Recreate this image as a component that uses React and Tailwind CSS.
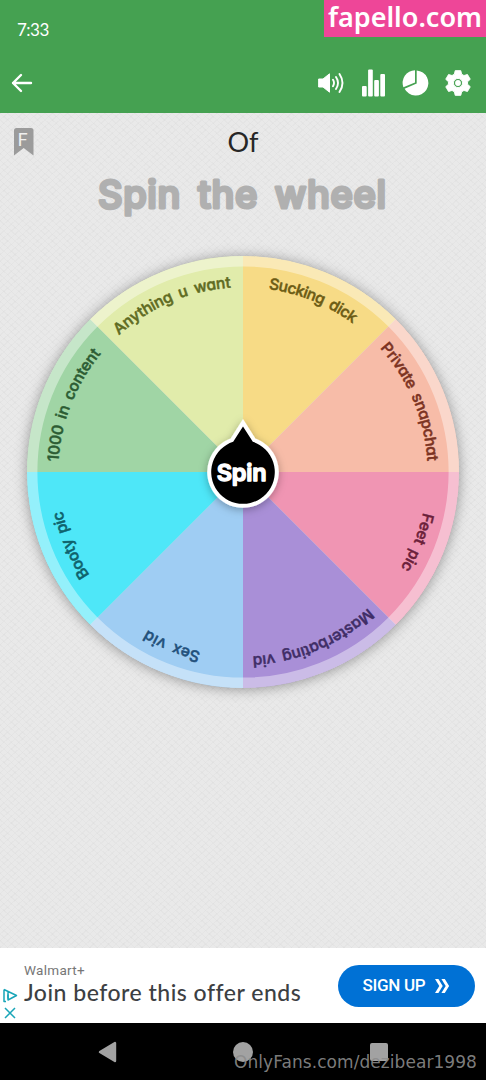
const CX = 220
const CY = 220
const R = 216
const LABEL_R = 184.7

const HUB = 'M220 174.5 L229.8 189.8 A31.8 31.8 0 1 1 210.2 189.8 Z'

const slices = [
  { label: 'Sucking dick', mid: 22.2, len: 92, fill: '#f7db86', text: '#6c5b14' },
  { label: 'Private snapchat', mid: 67.3, len: 125, fill: '#f7bca8', text: '#7c3322' },
  { label: 'Feet pic', mid: 112, len: 60, fill: '#f095b3', text: '#6b1f3a' },
  { label: 'Masterbating vid', mid: 157.2, len: 128, fill: '#a98fd7', text: '#3f2d66' },
  { label: 'Sex vid', mid: 202.2, len: 58, fill: '#9fcdf3', text: '#22507a' },
  { label: 'Booty pic', mid: 247, len: 70, fill: '#4ee7f8', text: '#0f626c' },
  { label: '1000 in content', mid: 291.5, len: 118, fill: '#a0d5a5', text: '#2c5c33' },
  { label: 'Anything u want', mid: 337, len: 124, fill: '#e1ecab', text: '#5f6b22' },
]

function point(angle, r) {
  const rad = (angle * Math.PI) / 180
  return `${(CX + r * Math.sin(rad)).toFixed(2)} ${(CY - r * Math.cos(rad)).toFixed(2)}`
}

function Wheel() {
  return (
    <svg width="440" height="440" viewBox="0 0 440 440" className="block overflow-visible">
      <defs>
        <filter id="wheelShadow" x="-20%" y="-20%" width="140%" height="140%">
          <feDropShadow dx="0" dy="1" stdDeviation="7" floodColor="#000" floodOpacity="0.4" />
        </filter>
        <filter id="hubShadow" x="-40%" y="-40%" width="180%" height="180%">
          <feDropShadow dx="0" dy="2" stdDeviation="4" floodColor="#000" floodOpacity="0.3" />
        </filter>
      </defs>
      <circle cx={CX} cy={CY} r={R - 0.5} fill="#ddd" filter="url(#wheelShadow)" />
      {slices.map((s, i) => (
        <path
          key={s.label}
          d={`M${CX} ${CY} L${point(i * 45, R)} A${R} ${R} 0 0 1 ${point(i * 45 + 45, R)} Z`}
          fill={s.fill}
        />
      ))}
      <circle cx={CX} cy={CY} r={R - 5.2} fill="none" stroke="#fff" strokeOpacity="0.4" strokeWidth="10.4" />
      {slices.map((s, i) => (
        <g key={s.label}>
          <path
            id={`arc-${i}`}
            d={`M${point(s.mid - 40, LABEL_R)} A${LABEL_R} ${LABEL_R} 0 0 1 ${point(s.mid + 40, LABEL_R)}`}
            fill="none"
          />
          <text
            className="font-['Inter',sans-serif] text-[15.5px] font-medium [font-feature-settings:'cv11']"
            fill={s.text}
            stroke={s.text}
            strokeWidth="0.5"
            strokeLinejoin="round"
            textAnchor="middle"
            textLength={s.len}
            wordSpacing="3"
          >
            <textPath href={`#arc-${i}`} startOffset="50%" textLength={s.len}>{s.label}</textPath>
          </text>
        </g>
      ))}
      {/* hub with pointer */}
      <path d={HUB} fill="#000" stroke="#fff" strokeWidth="8" strokeLinejoin="miter" filter="url(#hubShadow)" />
      <path d={HUB} fill="#000" />
      <text
        x="218.7" y="228.7" textAnchor="middle" textLength="50"
        fill="#fff" stroke="#fff" strokeWidth="1.4" strokeLinejoin="round"
        className="font-['Inter',sans-serif] text-[23.5px] font-semibold"
      >
        Spin
      </text>
    </svg>
  )
}

function Header() {
  return (
    <header className="h-[113px] bg-[#45a151] text-white">
      <div className="h-[56px] flex items-start justify-between">
        <span className="pl-[17px] pt-[19px] font-['Lato',sans-serif] text-[17px] leading-[22px] tracking-[-0.5px]">7:33</span>
        <div className="w-[162px] h-[37px] bg-[#ee4698] flex items-start justify-center">
          <span className="font-['Noto_Sans',sans-serif] font-semibold text-[27px] leading-[34px] tracking-[0px]">fapello.com</span>
        </div>
      </div>
      <div className="h-[54px] pl-[11px] pr-[14px] flex items-center justify-between">
        <svg width="22" height="22" viewBox="0 0 22 22" fill="none" stroke="#fff" strokeWidth="2.4" strokeLinecap="round" strokeLinejoin="round">
          <path d="M20 11H2M10 3L2 11l8 8" />
        </svg>
        <div className="flex items-center gap-[15px]">
          <svg width="28" height="28" viewBox="0 0 28 28" fill="none" stroke="#fff" strokeLinecap="round">
            <path d="M2 10h4l6.5-5.2v18.4L6 18H2z" fill="#fff" strokeWidth="1" strokeLinejoin="round" />
            <path d="M16 10.8q2 3.2 0 6.4M19 8q4 6 0 12M22.5 5q6 9 0 18" strokeWidth="1.9" />
          </svg>
          <svg width="26" height="28" viewBox="0 0 26 28" fill="#fff">
            <rect x="2" y="17" width="4.7" height="10.5" rx="1" />
            <rect x="8.1" y="0.5" width="4.7" height="27" rx="1" />
            <rect x="14.2" y="11" width="4.7" height="16.5" rx="1" />
            <rect x="20.3" y="5" width="4.7" height="22.5" rx="1" />
          </svg>
          <svg width="28" height="28" viewBox="0 0 28 28" fill="#fff">
            <path d="M14 1.2V13.4L2.4 18.2A12.6 12.6 0 0 1 14 1.2z" />
            <path d="M15.7 1.4V14.6L3.6 19.8A12.6 12.6 0 1 0 15.7 1.4z" />
          </svg>
          <svg width="28" height="28" viewBox="0 0 24 24" fill="#fff">
            <path fillRule="evenodd" d="M9.6 1.4h4.8l.7 3 2 1.2 3-.9 2.4 4.1-2.3 2.1v2.2l2.3 2.1-2.4 4.1-3-.9-2 1.2-.7 3H9.6l-.7-3-2-1.2-3 .9-2.4-4.1 2.3-2.1v-2.2L1.5 8.8l2.4-4.1 3 .9 2-1.2z M12 8.1a3.9 3.9 0 1 0 0 7.8 3.9 3.9 0 1 0 0-7.8z" stroke="#fff" strokeWidth="0.8" strokeLinejoin="round" />
            <circle cx="12" cy="12" r="2.5" />
          </svg>
        </div>
      </div>
    </header>
  )
}

function AdBanner() {
  return (
    <div className="h-[75px] bg-white flex items-center">
      <div className="w-[24px] h-full pl-[2px] pt-[40px] flex flex-col gap-[3px]">
        <svg width="16" height="15" viewBox="0 0 16 15" fill="none" stroke="#19a5b8" strokeWidth="1.5" strokeLinejoin="round">
          <path d="M2 1.5v12h2M2 1.5L14.5 7.5 6 12V4.2" />
          <path d="M6 6.5v4" />
        </svg>
        <svg width="16" height="13" viewBox="0 0 16 13" stroke="#19a5b8" strokeWidth="1.5">
          <path d="M3 2l10 10M13 2L3 12" />
        </svg>
      </div>
      <div className="flex-1 pb-[4px]">
        <div className="font-['Roboto',sans-serif] text-[13.5px] leading-[18px] tracking-[0.3px] text-[#767676]">Walmart+</div>
        <div className="font-['Lato',sans-serif] font-medium text-[23px] leading-[27px] tracking-[0.5px] text-[#3c4043] whitespace-nowrap">Join before this offer ends</div>
      </div>
      <button className="w-[137px] h-[42px] mr-[11px] rounded-full bg-[#0071d5] text-white flex items-center justify-center gap-[9px]">
        <span className="font-['Roboto',sans-serif] font-medium text-[17px] tracking-[-0.3px]">SIGN UP</span>
        <svg width="16" height="14" viewBox="0 0 16 14" fill="#fff">
          <path d="M1 0h3.4l4.3 7-4.3 7H1l4.3-7zM7.4 0h3.4l4.3 7-4.3 7H7.4l4.3-7z" />
        </svg>
      </button>
    </div>
  )
}

function NavBar() {
  return (
    <div className="relative h-[57px] bg-black">
      <svg width="486" height="57" viewBox="0 0 486 57" fill="#a2a2a2">
        <path d="M100 29l15-9v18z" stroke="#a2a2a2" strokeWidth="2.4" strokeLinejoin="round" />
        <circle cx="243" cy="29" r="10" />
        <rect x="370" y="20" width="18" height="18" rx="2" />
      </svg>
      <span className="absolute left-[234px] top-[28px] font-['DejaVu_Sans',sans-serif] text-[17px] leading-[22px] tracking-[0.06px] text-[#8c8c8c]/90 whitespace-nowrap">
        OnlyFans.com/dezibear1998
      </span>
    </div>
  )
}

export default function App() {
  return (
    <div className="w-[486px] h-[1080px] flex flex-col overflow-hidden bg-black">
      <Header />
      <main className="flex-1 flex flex-col items-center bg-[#e9e9e9] bg-[repeating-linear-gradient(42deg,rgba(0,0,0,0.018)_0_1px,transparent_1px_5px),repeating-linear-gradient(-42deg,rgba(0,0,0,0.018)_0_1px,transparent_1px_5px)]">
        <div className="w-full h-[58px] px-[14px] grid grid-cols-[60px_1fr_60px]">
          <svg width="20" height="28" viewBox="0 0 20 28" className="mt-[15px]">
            <path d="M0 2.5Q0 0 2.5 0h14.5Q19.5 0 19.5 2.5V27.5L9.7 20 0 27.5z" fill="#9b9b9b" />
            <text x="3.6" y="17.8" fill="#f0f0f0" className="font-['Lato',sans-serif] text-[18px]">F</text>
          </svg>
          <h1 className="pt-[12px] text-center font-['Lato',sans-serif] text-[27px] leading-[34px] text-[#262626]">Of</h1>
        </div>
        <svg width="300" height="50" viewBox="0 0 300 50" className="block">
          <text
            x="5" y="37" textLength="288" wordSpacing="6"
            fill="#b0b0b0" stroke="#b0b0b0" strokeWidth="3" strokeLinejoin="round"
            className="font-['Inter',sans-serif] text-[38px] font-medium"
          >
            Spin the wheel
          </text>
        </svg>
        <div className="mt-[31px]">
          <Wheel />
        </div>
      </main>
      <AdBanner />
      <NavBar />
    </div>
  )
}
